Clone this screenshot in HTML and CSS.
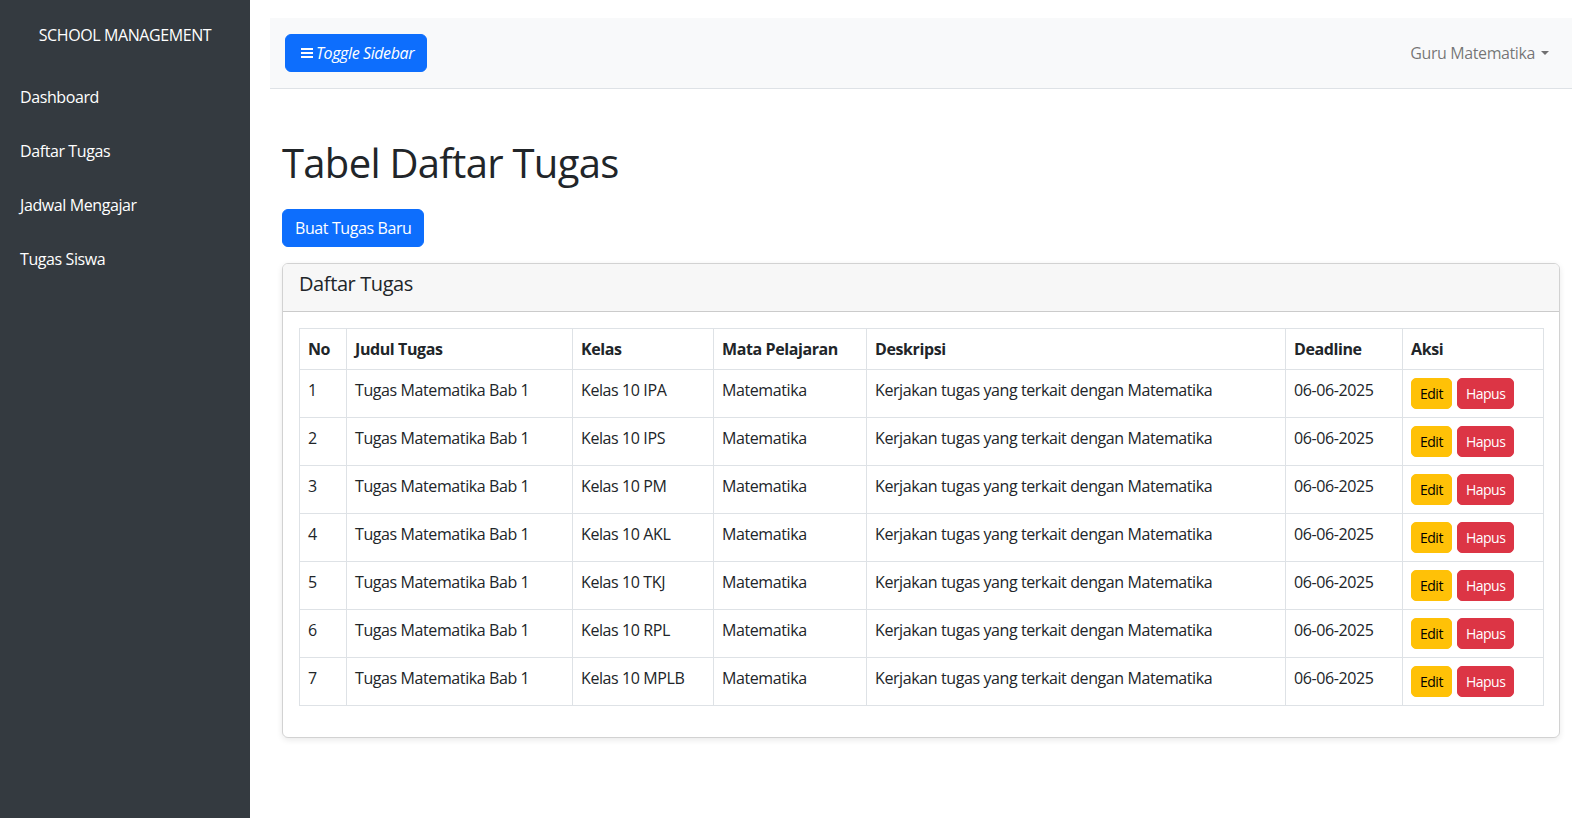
FILE: index.html
```html
<!DOCTYPE html>
<html lang="id">
<head>
<meta charset="utf-8">
<title>Tabel Daftar Tugas</title>
<link rel="stylesheet" href="styles.css">
</head>
<body>
<div class="layout">
  <nav class="sidebar">
    <div class="sidebar-header">SCHOOL MANAGEMENT</div>
    <ul class="side-menu">
      <li><a href="#" class="side-link">Dashboard</a></li>
      <li><a href="#" class="side-link">Daftar Tugas</a></li>
      <li><a href="#" class="side-link">Jadwal Mengajar</a></li>
      <li><a href="#" class="side-link">Tugas Siswa</a></li>
    </ul>
  </nav>
  <div class="main">
    <header class="topbar">
      <button class="btn btn-primary btn-toggle" type="button">
        <svg class="bars-icon" width="12" height="10" viewBox="0 0 12 10" aria-hidden="true"><rect x="0" y="0" width="12" height="2" fill="#fff"/><rect x="0" y="4" width="12" height="2" fill="#fff"/><rect x="0" y="8" width="12" height="2" fill="#fff"/></svg><i class="toggle-text">Toggle Sidebar</i>
      </button>
      <a href="#" class="user-menu">Guru Matematika<span class="caret"></span></a>
    </header>
    <div class="content">
      <h1 class="page-title">Tabel Daftar Tugas</h1>
      <button class="btn btn-primary" type="button">Buat Tugas Baru</button>
      <div class="card">
        <div class="card-header"><h5 class="card-title">Daftar Tugas</h5></div>
        <div class="card-body">
          <table class="table">
            <colgroup>
              <col class="c-no"><col class="c-judul"><col class="c-kelas"><col class="c-mapel"><col class="c-desk"><col class="c-dl"><col class="c-aksi">
            </colgroup>
            <thead>
              <tr><th>No</th><th>Judul Tugas</th><th>Kelas</th><th>Mata Pelajaran</th><th>Deskripsi</th><th>Deadline</th><th>Aksi</th></tr>
            </thead>
            <tbody>
              <tr><td>1</td><td>Tugas Matematika Bab 1</td><td>Kelas 10 IPA</td><td>Matematika</td><td>Kerjakan tugas yang terkait dengan Matematika</td><td>06-06-2025</td><td><div class="actions"><button class="btn-sm btn-warning">Edit</button><button class="btn-sm btn-danger">Hapus</button></div></td></tr>
              <tr><td>2</td><td>Tugas Matematika Bab 1</td><td>Kelas 10 IPS</td><td>Matematika</td><td>Kerjakan tugas yang terkait dengan Matematika</td><td>06-06-2025</td><td><div class="actions"><button class="btn-sm btn-warning">Edit</button><button class="btn-sm btn-danger">Hapus</button></div></td></tr>
              <tr><td>3</td><td>Tugas Matematika Bab 1</td><td>Kelas 10 PM</td><td>Matematika</td><td>Kerjakan tugas yang terkait dengan Matematika</td><td>06-06-2025</td><td><div class="actions"><button class="btn-sm btn-warning">Edit</button><button class="btn-sm btn-danger">Hapus</button></div></td></tr>
              <tr><td>4</td><td>Tugas Matematika Bab 1</td><td>Kelas 10 AKL</td><td>Matematika</td><td>Kerjakan tugas yang terkait dengan Matematika</td><td>06-06-2025</td><td><div class="actions"><button class="btn-sm btn-warning">Edit</button><button class="btn-sm btn-danger">Hapus</button></div></td></tr>
              <tr><td>5</td><td>Tugas Matematika Bab 1</td><td>Kelas 10 TKJ</td><td>Matematika</td><td>Kerjakan tugas yang terkait dengan Matematika</td><td>06-06-2025</td><td><div class="actions"><button class="btn-sm btn-warning">Edit</button><button class="btn-sm btn-danger">Hapus</button></div></td></tr>
              <tr><td>6</td><td>Tugas Matematika Bab 1</td><td>Kelas 10 RPL</td><td>Matematika</td><td>Kerjakan tugas yang terkait dengan Matematika</td><td>06-06-2025</td><td><div class="actions"><button class="btn-sm btn-warning">Edit</button><button class="btn-sm btn-danger">Hapus</button></div></td></tr>
              <tr><td>7</td><td>Tugas Matematika Bab 1</td><td>Kelas 10 MPLB</td><td>Matematika</td><td>Kerjakan tugas yang terkait dengan Matematika</td><td>06-06-2025</td><td><div class="actions"><button class="btn-sm btn-warning">Edit</button><button class="btn-sm btn-danger">Hapus</button></div></td></tr>
            </tbody>
          </table>
        </div>
      </div>
    </div>
  </div>
</div>
</body>
</html>
```
FILE: styles.css
```css
* { box-sizing: border-box; }
html, body { margin: 0; padding: 0; }
body {
  font-family: "Open Sans", "Noto Sans", "Liberation Sans", sans-serif;
  font-size: 16px;
  line-height: 1.5;
  letter-spacing: -0.4px;
  color: #212529;
  background: #fff;
}
.layout { display: flex; min-height: 818px; }
.sidebar {
  width: 250px;
  flex: 0 0 250px;
  background: #343a40;
  color: #fff;
}
.sidebar-header {
  padding: 23px 0 23px;
  text-align: center;
  font-size: 16px;
  line-height: 24px;
}
.side-menu { list-style: none; margin: 0; padding: 0; }
.side-link {
  display: block;
  padding: 15px 20px;
  color: #fff;
  text-decoration: none;
  line-height: 24px;
}
.main { flex: 1; padding: 18px 20px 0; min-width: 0; }
.topbar {
  display: flex;
  align-items: center;
  justify-content: space-between;
  background: #f8f9fa;
  border-bottom: 1px solid #dee2e6;
  padding: 16px 23px 16px 15px;
}
.btn {
  display: inline-flex;
  align-items: center;
  font-family: inherit;
  font-size: 16px;
  line-height: 24px;
  letter-spacing: -0.4px;
  padding: 6px 12px;
  border: 1px solid transparent;
  border-radius: 6px;
  cursor: pointer;
}
.btn-primary { background: #0d6efd; border-color: #0d6efd; color: #fff; }
.bars-icon { margin: 0 3px 0 3px; }
.toggle-text { font-style: italic; }
.user-menu {
  color: rgba(0, 0, 0, 0.55);
  text-decoration: none;
  display: inline-flex;
  align-items: center;
}
.caret {
  display: inline-block;
  margin-left: 6px;
  width: 0;
  height: 0;
  border-top: 4.5px solid rgba(0,0,0,0.55);
  border-left: 4px solid transparent;
  border-right: 4px solid transparent;
}
.content { padding: 50px 12px 0; }
.page-title {
  font-size: 40px;
  font-weight: 500;
  line-height: 1.2;
  letter-spacing: -0.7px;
  margin: 0 0 22px;
}
.card {
  margin-top: 16px;
  border: 1px solid rgba(0, 0, 0, 0.175);
  border-radius: 6px;
  box-shadow: 0 2px 6px rgba(0, 0, 0, 0.09);
  overflow: hidden;
}
.card-header {
  background: #f7f7f7;
  border-bottom: 1px solid rgba(0, 0, 0, 0.175);
  padding: 8px 16px;
}
.card-title {
  margin: 0 0 7px;
  font-size: 20px;
  font-weight: 500;
  line-height: 24px;
}
.card-body { padding: 16px; }
.table {
  width: 100%;
  border-collapse: collapse;
  table-layout: fixed;
  margin-bottom: 15px;
  vertical-align: top;
}
.table th, .table td {
  border: 1px solid #dee2e6;
  padding: 8px;
  text-align: left;
  line-height: 24px;
}
.table thead th { vertical-align: bottom; font-weight: 700; }
.table td { vertical-align: top; }
.c-no { width: 47px; }
.c-judul { width: 226px; }
.c-kelas { width: 141px; }
.c-mapel { width: 153px; }
.c-desk { width: 419px; }
.c-dl { width: 117px; }
.c-aksi { width: 141px; }
.actions { display: flex; gap: 5px; }
.btn-sm {
  font-family: inherit;
  font-size: 14px;
  line-height: 21px;
  letter-spacing: -0.5px;
  padding: 4px 8px;
  border: 1px solid transparent;
  border-radius: 5px;
  cursor: pointer;
}
.btn-warning { background: #ffc107; border-color: #ffc107; color: #000; }
.btn-danger { background: #dc3545; border-color: #dc3545; color: #fff; }
```
